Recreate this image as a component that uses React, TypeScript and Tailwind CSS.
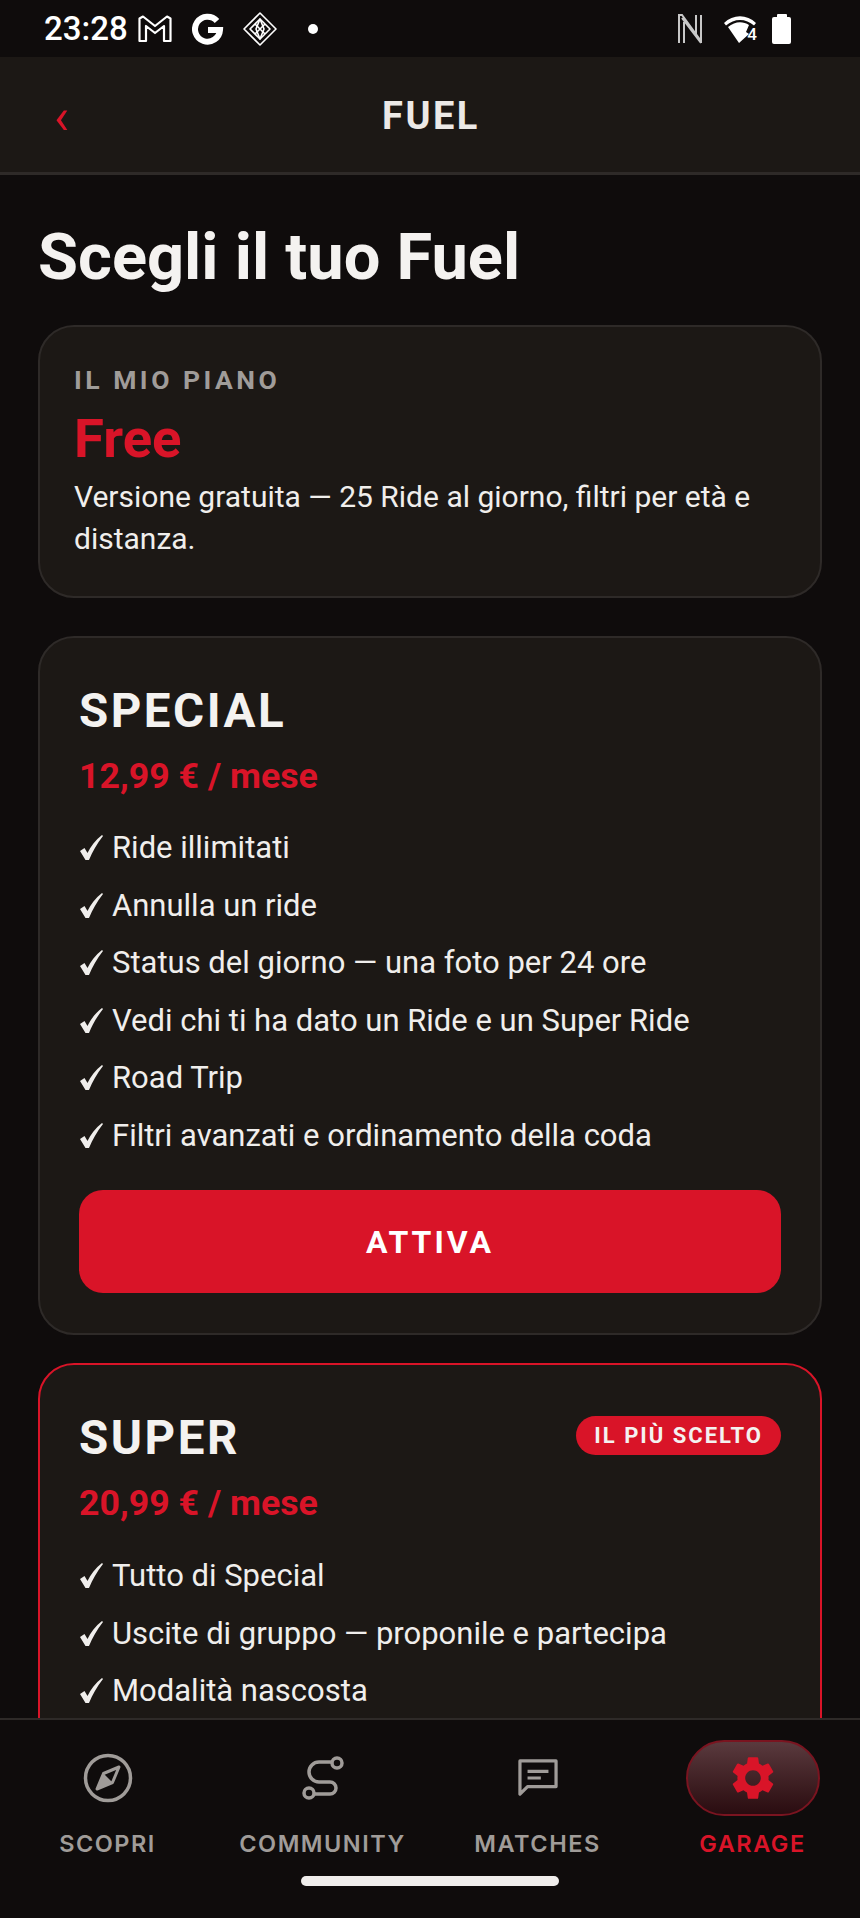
// App.tsx
const RED = "text-[#d91428]"

function GmailIcon() {
  return (
    <svg width="34" height="28" viewBox="0 0 34 28" fill="none" stroke="white" strokeWidth="2.2" strokeLinejoin="round">
      <path d="M1.5 3.5 L5 1.5 L17 11 L29 1.5 L32.5 3.5 V26 H26 V11 L17 18 L8 11 V26 H1.5 Z" />
    </svg>
  )
}

function GoogleIcon() {
  return (
    <svg width="32" height="32" viewBox="0 0 32 32" fill="none" stroke="white" strokeWidth="6">
      <path d="M25 8 A12.5 12.5 0 1 0 28 17 H16" />
    </svg>
  )
}

function DiamondIcon() {
  return (
    <svg width="36" height="36" viewBox="0 0 36 36" fill="none" stroke="white" strokeWidth="1.6" strokeLinejoin="round" className="-ml-[2px]">
      <path d="M18 2 L34 18 L18 34 L2 18 Z" />
      <path d="M18 8 L28 18 L18 28 L8 18 Z" />
      <path d="M13 13 L23 23 M23 13 L13 23" />
      <path d="M18 8 L14 18 L18 28 L22 18 Z" />
    </svg>
  )
}

function NfcIcon() {
  return (
    <svg width="26" height="32" viewBox="0 0 26 32" fill="none" stroke="#c8c8c8" strokeWidth="2">
      <path d="M2 30 V2 H5 L24 28 M7 30 V9 M19 2 V23 M24 30 L5 5 M24 30 V2" />
    </svg>
  )
}

function WifiIcon() {
  return (
    <div className="relative h-[30px] w-[34px]">
      <svg width="34" height="30" viewBox="0 0 34 30">
        <path d="M1 9 C10 0 24 0 33 9 L31 11.5 C23 4 11 4 3 11.5 Z" fill="white" />
        <path d="M5 13 C12 7 20 7 26 11 L23 18 L26 20 L16 29 Z" fill="white" />
      </svg>
      <span className="absolute right-0 bottom-[1px] text-[17px] leading-[17px] font-medium text-white">4</span>
    </div>
  )
}

function BatteryIcon() {
  return (
    <div className="flex flex-col items-center">
      <div className="h-[3px] w-[10px] rounded-t-[1px] bg-white" />
      <div className="h-[27px] w-[19px] rounded-[2px] bg-white" />
    </div>
  )
}

function CompassIcon() {
  return (
    <svg width="50" height="50" viewBox="0 0 50 50" fill="none">
      <circle cx="25" cy="25" r="22.5" stroke="#a09c99" strokeWidth="3.5" />
      <path d="M36 14 L29.5 29.5 L14 36 L20.5 20.5 Z" stroke="#a09c99" strokeWidth="3" strokeLinejoin="round" />
      <path d="M14 36 L20.5 20.5 L29.5 29.5 Z" fill="#a09c99" />
    </svg>
  )
}

function RouteIcon() {
  return (
    <svg width="44" height="46" viewBox="0 0 44 46" fill="none" stroke="#a09c99" strokeWidth="3.5">
      <circle cx="36" cy="8" r="5" />
      <circle cx="8" cy="38" r="5" />
      <path d="M31 7 H18 A10 10 0 0 0 18 27 H29 A6 6 0 0 1 29 39 H13" />
    </svg>
  )
}

function ChatIcon() {
  return (
    <svg width="40" height="38" viewBox="0 0 42 40" fill="none" stroke="#a09c99" strokeWidth="3.4" strokeLinejoin="round">
      <path d="M2 2 H40 V29 H10 L2 37 Z" />
      <path d="M10 13 H32 M10 20 H24" />
    </svg>
  )
}

function GearIcon() {
  return (
    <svg width="52" height="52" viewBox="0 0 24 24" fill="#d91428">
      <path d="M19.14 12.94c.04-.3.06-.61.06-.94 0-.32-.02-.64-.07-.94l2.03-1.58a.49.49 0 0 0 .12-.61l-1.92-3.32a.488.488 0 0 0-.59-.22l-2.39.96c-.5-.38-1.03-.7-1.62-.94l-.36-2.54a.484.484 0 0 0-.48-.41h-3.84c-.24 0-.43.17-.47.41l-.36 2.54c-.59.24-1.13.57-1.62.94l-2.39-.96c-.22-.08-.47 0-.59.22L2.74 8.87c-.12.21-.08.47.12.61l2.03 1.58c-.05.3-.09.63-.09.94s.02.64.07.94l-2.03 1.58a.49.49 0 0 0-.12.61l1.92 3.32c.12.22.37.29.59.22l2.39-.96c.5.38 1.03.7 1.62.94l.36 2.54c.05.24.24.41.48.41h3.84c.24 0 .44-.17.47-.41l.36-2.54c.59-.24 1.13-.56 1.62-.94l2.39.96c.22.08.47 0 .59-.22l1.92-3.32c.12-.22.07-.47-.12-.61l-2.01-1.58zM12 15.6c-1.98 0-3.6-1.62-3.6-3.6s1.62-3.6 3.6-3.6 3.6 1.62 3.6 3.6-1.62 3.6-3.6 3.6z" />
    </svg>
  )
}

function CheckMark() {
  return (
    <svg width="25" height="27" viewBox="0 0 25 27" className="mr-[8px] shrink-0" fill="#f0eeec">
      <path d="M1 17 L5.5 14 L8.5 19 C11.5 12.5 16.5 6 23 1 L24 2 C18 9.5 13.5 17.5 10 26 L6.5 26 Z" />
    </svg>
  )
}

function Feature({ label }: { label: string }) {
  return (
    <li className="flex h-[57.5px] items-center text-[31px] leading-[57.5px] whitespace-nowrap text-[#f0eeec]">
      <CheckMark />
      {label}
    </li>
  )
}

function NavItem({ label, icon, active }: { label: string; icon: React.ReactNode; active?: boolean }) {
  return (
    <div className="flex w-[215px] flex-col items-center">
      <div
        className={
          active
            ? "flex h-[76px] w-[134px] items-center justify-center rounded-full border-2 border-[#7a1420] bg-gradient-to-b from-[#5a3a3e] to-[#2a0c10]"
            : "flex h-[76px] w-[134px] items-center justify-center"
        }
      >
        {icon}
      </div>
      <span
        className={
          "mt-[13px] font-['Inter',sans-serif] text-[23.5px] leading-[30px] font-semibold tracking-[1.5px] " +
          (active ? RED : "text-[#a09c99]")
        }
      >
        {label}
      </span>
    </div>
  )
}

export default function App() {
  return (
    <div className="flex h-[1918px] w-[860px] flex-col overflow-hidden bg-[#0f0c0c] font-['Roboto',sans-serif]">
      {/* status bar */}
      <div className="flex h-[57px] shrink-0 items-center pr-[69px] pl-[44px]">
        <span className="text-[33px] leading-none font-medium text-white">23:28</span>
        <div className="ml-[10px] flex items-center gap-[20px]">
          <GmailIcon />
          <GoogleIcon />
          <DiamondIcon />
        </div>
        <div className="ml-[30px] h-[10px] w-[10px] rounded-full bg-white" />
        <div className="ml-auto flex items-center">
          <NfcIcon />
          <div className="ml-[20px]">
            <WifiIcon />
          </div>
          <div className="ml-[15px]">
            <BatteryIcon />
          </div>
        </div>
      </div>

      {/* header */}
      <div className="relative flex h-[118px] shrink-0 items-center justify-center border-b-[3px] border-[#2e2a28] bg-[#1c1815] pt-[4px]">
        <span className="absolute left-[54px] text-[50px] leading-none text-[#d91428]">‹</span>
        <span className="pl-[2px] text-[38px] font-bold tracking-[2.5px] text-[#ece9e7]">FUEL</span>
      </div>

      {/* content */}
      <div className="min-h-0 flex-1 overflow-hidden px-[38px] pt-[46px]">
        <h1 className="text-[65px] leading-[72px] font-bold text-[#f4f2f0]">Scegli il tuo Fuel</h1>

        <div className="mt-[32px] h-[273px] rounded-[36px] border-2 border-[#2e2a28] bg-[#1c1815] px-[34px] pt-[38px]">
          <p className="text-[26.5px] leading-[30px] font-bold tracking-[3.5px] text-[#a09c99]">IL MIO PIANO</p>
          <p className="mt-[13px] text-[54.5px] leading-[60px] font-bold text-[#d91428]">Free</p>
          <p className="mt-[8px] text-[30px] leading-[42px] text-[#f0eeec]">
            Versione gratuita — 25 Ride al giorno, filtri per età e distanza.
          </p>
        </div>

        <div className="mt-[38px] h-[699px] rounded-[36px] border-2 border-[#2e2a28] bg-[#1c1815] px-[39px] pt-[46px]">
          <h2 className="text-[47.5px] leading-[54px] font-bold tracking-[2.5px] text-[#f4f2f0]">SPECIAL</h2>
          <p className="mt-[17px] text-[35.7px] leading-[42px] font-bold text-[#d91428]">12,99 € / mese</p>
          <ul className="mt-[22px]">
            <Feature label="Ride illimitati" />
            <Feature label="Annulla un ride" />
            <Feature label="Status del giorno — una foto per 24 ore" />
            <Feature label="Vedi chi ti ha dato un Ride e un Super Ride" />
            <Feature label="Road Trip" />
            <Feature label="Filtri avanzati e ordinamento della coda" />
          </ul>
          <button className="mt-[26px] h-[103px] w-full rounded-[24px] bg-[#d91428] text-[32px] font-bold tracking-[3px] text-white">
            ATTIVA
          </button>
        </div>

        <div className="mt-[28px] h-[700px] rounded-[36px] border-2 border-[#d91428] bg-[#1c1815] px-[39px] pt-[46px]">
          <div className="flex items-start justify-between">
            <h2 className="text-[47.5px] leading-[54px] font-bold tracking-[2.5px] text-[#f4f2f0]">SUPER</h2>
            <span className="mt-[5px] rounded-full bg-[#d91428] px-[18px] text-[22px] leading-[39px] font-bold tracking-[2px] text-[#f4f2f0]">
              IL PIÙ SCELTO
            </span>
          </div>
          <p className="mt-[17px] text-[35.7px] leading-[42px] font-bold text-[#d91428]">20,99 € / mese</p>
          <ul className="mt-[23px]">
            <Feature label="Tutto di Special" />
            <Feature label="Uscite di gruppo — proponile e partecipa" />
            <Feature label="Modalità nascosta" />
          </ul>
        </div>
      </div>

      {/* bottom nav */}
      <div className="relative h-[200px] shrink-0 border-t-[2px] border-[#2e2a28] bg-[#0f0c0c]">
        <div className="flex pt-[20px]">
          <NavItem label="SCOPRI" icon={<CompassIcon />} />
          <NavItem label="COMMUNITY" icon={<RouteIcon />} />
          <NavItem label="MATCHES" icon={<ChatIcon />} />
          <NavItem label="GARAGE" icon={<GearIcon />} active />
        </div>
        <div className="absolute bottom-[32px] left-[301px] h-[10px] w-[258px] rounded-full bg-[#f0eeec]" />
      </div>
    </div>
  )
}
